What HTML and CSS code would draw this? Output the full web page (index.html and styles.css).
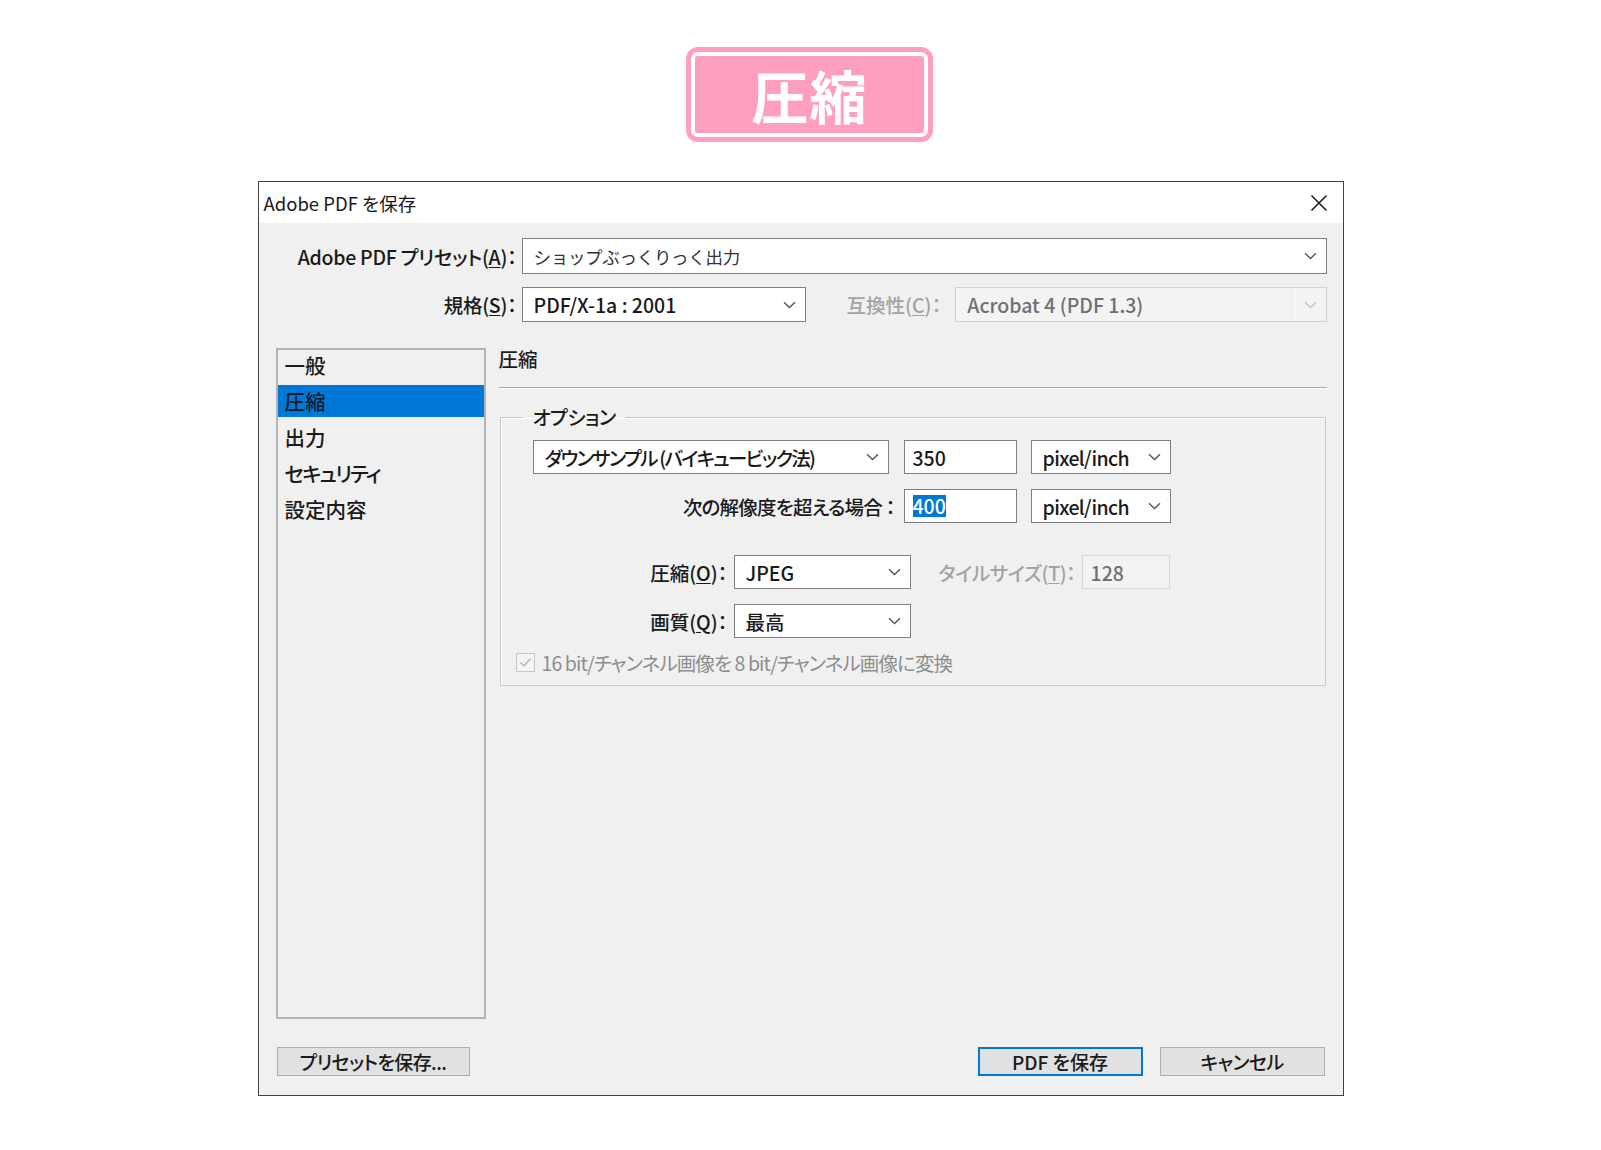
FILE: index.html
```html
<!DOCTYPE html>
<html lang="ja">
<head>
<meta charset="utf-8">
<title>Adobe PDF を保存</title>
<link rel="stylesheet" href="styles.css">
</head>
<body>
<div class="page">
  <div class="badge"><div class="badge-inner">圧縮</div></div>

  <div class="dialog">
    <div class="titlebar">
      <span class="title">Adobe PDF を保存</span>
      <svg class="close" width="18" height="18" viewBox="0 0 18 18"><path d="M1.5 1.5 L16.5 16.5 M16.5 1.5 L1.5 16.5" stroke="#1f1f1f" stroke-width="1.6" fill="none"/></svg>
    </div>

    <div class="body">
      <div class="row row-preset">
        <span class="lbl lbl-main">Adobe PDF プリセット(<u>A</u>)：</span>
        <div class="select select-preset">
          <span class="val val-plain">ショップぶっくりっく出力</span>
          <svg class="chev" width="13" height="8" viewBox="0 0 13 8"><path d="M1 1.2 L6.5 6.5 L12 1.2" stroke="#555" stroke-width="1.4" fill="none"/></svg>
        </div>
      </div>

      <div class="row row-std">
        <span class="lbl lbl-main">規格(<u>S</u>)：</span>
        <div class="select select-std">
          <span class="val">PDF/X-1a : 2001</span>
          <svg class="chev" width="13" height="8" viewBox="0 0 13 8"><path d="M1 1.2 L6.5 6.5 L12 1.2" stroke="#555" stroke-width="1.4" fill="none"/></svg>
        </div>
        <span class="lbl lbl-compat is-off">互換性(<u>C</u>)：</span>
        <div class="select select-compat is-disabled">
          <span class="val">Acrobat 4 (PDF 1.3)</span>
          <span class="drop-btn"><svg class="chev" width="13" height="8" viewBox="0 0 13 8"><path d="M1 1.2 L6.5 6.5 L12 1.2" stroke="#c4c4c4" stroke-width="1.4" fill="none"/></svg></span>
        </div>
      </div>

      <div class="main">
        <ul class="nav">
          <li class="nav-item">一般</li>
          <li class="nav-item is-active">圧縮</li>
          <li class="nav-item">出力</li>
          <li class="nav-item nav-kana">セキュリティ</li>
          <li class="nav-item">設定内容</li>
        </ul>

        <div class="pane">
          <div class="pane-title">圧縮</div>
          <fieldset class="group">
            <legend class="group-legend">オプション</legend>
            <div class="group-body">
              <div class="grow">
                <div class="select select-ds">
                  <span class="val val-tight">ダウンサンプル (バイキュービック法)</span>
                  <svg class="chev" width="13" height="8" viewBox="0 0 13 8"><path d="M1 1.2 L6.5 6.5 L12 1.2" stroke="#555" stroke-width="1.4" fill="none"/></svg>
                </div>
                <div class="input input-res"><span class="val">350</span></div>
                <div class="select select-unit">
                  <span class="val val-unit">pixel/inch</span>
                  <svg class="chev" width="13" height="8" viewBox="0 0 13 8"><path d="M1 1.2 L6.5 6.5 L12 1.2" stroke="#555" stroke-width="1.4" fill="none"/></svg>
                </div>
              </div>

              <div class="grow grow-2">
                <span class="lbl lbl-over">次の解像度を超える場合 ：</span>
                <div class="input input-res"><span class="val sel-text">400</span></div>
                <div class="select select-unit">
                  <span class="val val-unit">pixel/inch</span>
                  <svg class="chev" width="13" height="8" viewBox="0 0 13 8"><path d="M1 1.2 L6.5 6.5 L12 1.2" stroke="#555" stroke-width="1.4" fill="none"/></svg>
                </div>
              </div>

              <div class="grow grow-3">
                <span class="lbl lbl-short">圧縮(<u>O</u>)：</span>
                <div class="select select-small">
                  <span class="val">JPEG</span>
                  <svg class="chev" width="13" height="8" viewBox="0 0 13 8"><path d="M1 1.2 L6.5 6.5 L12 1.2" stroke="#555" stroke-width="1.4" fill="none"/></svg>
                </div>
                <span class="lbl lbl-tile is-off">タイルサイズ(<u>T</u>)：</span>
                <div class="input input-tile is-disabled"><span class="val">128</span></div>
              </div>

              <div class="grow grow-4">
                <span class="lbl lbl-short">画質(<u>Q</u>)：</span>
                <div class="select select-small">
                  <span class="val">最高</span>
                  <svg class="chev" width="13" height="8" viewBox="0 0 13 8"><path d="M1 1.2 L6.5 6.5 L12 1.2" stroke="#555" stroke-width="1.4" fill="none"/></svg>
                </div>
              </div>

              <div class="check-row">
                <span class="checkbox"><svg width="13" height="11" viewBox="0 0 13 11"><path d="M1.5 5.5 L5 9 L11.5 1.5" stroke="#b8b8b8" stroke-width="1.5" fill="none"/></svg></span>
                <span class="check-label">16 bit/チャンネル画像を 8 bit/チャンネル画像に変換</span>
              </div>
            </div>
          </fieldset>
        </div>
      </div>

      <div class="buttons">
        <div class="btn btn-preset">プリセットを保存...</div>
        <div class="btn-spacer"></div>
        <div class="btn btn-default">PDF を保存</div>
        <div class="btn btn-cancel">キャンセル</div>
      </div>
    </div>
  </div>
</div>
</body>
</html>
```

FILE: styles.css
```css
html, body {
  margin: 0;
  padding: 0;
  background: #ffffff;
}

body {
  font-family: "Noto Sans CJK JP", "Noto Sans", sans-serif;
  color: #1c1c1c;
}

.page {
  display: flex;
  flex-direction: column;
  align-items: center;
  padding-top: 47px;
}

/* pink heading badge */
.badge {
  box-sizing: border-box;
  width: 247px;
  height: 95px;
  margin-left: 18px;
  border: 5px solid #fd9fbd;
  border-radius: 12px;
  padding: 4px;
  background: #ffffff;
}

.badge-inner {
  height: 100%;
  background: #fd9fbd;
  border-radius: 3px;
  color: #ffffff;
  font-weight: 700;
  font-size: 57px;
  line-height: 77px;
  text-align: center;
  letter-spacing: 1px;
}

/* dialog window */
.dialog {
  box-sizing: border-box;
  width: 1086px;
  height: 915px;
  margin-top: 39px;
  border: 1px solid #404040;
  background: #f0f0f0;
  display: flex;
  flex-direction: column;
}

.titlebar {
  height: 41px;
  background: #ffffff;
  display: flex;
  align-items: center;
  padding: 0 15px 0 5px;
}

.title {
  flex: 1;
  font-size: 18.5px;
  font-feature-settings: "palt";
  color: #1a1a1a;
}

.close {
  display: block;
}

.body {
  flex: 1;
  padding: 15px 16px 18px 17px;
  display: flex;
  flex-direction: column;
}

.row {
  display: flex;
  align-items: center;
}

.row-preset {
  height: 36px;
}

.row-std {
  height: 35px;
  margin-top: 13px;
}

.lbl {
  font-size: 19.5px;
  font-weight: 500;
  font-feature-settings: "palt";
  white-space: nowrap;
  color: #1a1a1a;
}

.lbl u {
  text-underline-offset: 2px;
}

.lbl-main {
  width: 241px;
  margin-right: 5px;
  text-align: right;
}

.lbl-main:first-child {
  letter-spacing: -0.3px;
}

.is-off {
  color: #a3a3a3;
}

/* combo boxes and inputs */
.select,
.input {
  box-sizing: border-box;
  height: 100%;
  display: flex;
  align-items: center;
  background: #ffffff;
  border: 1px solid #7f7f7f;
  font-size: 19.5px;
  font-weight: 500;
  font-feature-settings: "palt";
  white-space: nowrap;
  color: #1a1a1a;
}

.select {
  padding: 0 9px 0 11px;
}

.select .val {
  flex: 1;
  overflow: hidden;
}

.val-plain {
  font-feature-settings: normal;
  font-weight: 400;
  font-size: 17.5px;
  letter-spacing: -0.3px;
  color: #333;
}

.val-tight {
  letter-spacing: -1.7px;
}

.val-unit {
  letter-spacing: -0.6px;
}

.chev {
  display: block;
  flex: none;
}

.select-preset {
  flex: 1;
}

.select-std {
  width: 284px;
}

.lbl-compat {
  margin-left: 41px;
  margin-right: 14px;
}

.select-compat {
  flex: 1;
  border-color: #d2d2d2;
  background: #f3f3f3;
  color: #707070;
  padding-right: 0;
}

.drop-btn {
  align-self: stretch;
  width: 30px;
  display: flex;
  align-items: center;
  justify-content: center;
  border-left: 1px solid #f8f8f8;
}

/* left category list and right pane */
.main {
  display: flex;
  margin-top: 26px;
  height: 671px;
}

.nav {
  box-sizing: border-box;
  width: 210px;
  height: 100%;
  margin: 0 12px 0 0;
  padding: 0;
  list-style: none;
  border: 2px solid #b3b3b3;
  background: #f0f0f0;
}

.nav-item {
  height: 32px;
  line-height: 32px;
  margin-bottom: 4px;
  padding-left: 7px;
  font-size: 20.5px;
  font-weight: 500;
  font-feature-settings: "palt";
  color: #1a1a1a;
}

.nav-kana {
  letter-spacing: -1.8px;
}

.nav-item:first-child {
  margin-top: -1px;
}

.nav-item.is-active {
  background: #0078d7;
  color: #0d1a2a;
}

.pane {
  flex: 1;
  display: flex;
  flex-direction: column;
}

.pane-title {
  height: 39px;
  line-height: 22px;
  font-size: 19.5px;
  font-weight: 500;
  font-feature-settings: "palt";
  margin-left: 1px;
  border-bottom: 1px solid #a8a8a8;
  box-shadow: 0 1px 0 #ffffff;
}

.group {
  margin: 18px 1px 0 2px;
  padding: 0;
  border: 1px solid #c9c9c9;
  box-shadow: inset 1px 1px 0 #ffffff;
  min-inline-size: 0;
}

.group-legend {
  margin-left: 22px;
  padding: 0 10px;
  font-size: 19.5px;
  font-weight: 500;
  line-height: 22px;
  font-feature-settings: "palt";
  letter-spacing: -0.5px;
}

.group-body {
  padding: 12px 0 13px 32px;
}

.grow {
  display: flex;
  align-items: center;
  height: 34px;
}

.grow-2 {
  margin-top: 15px;
}

.grow-3 {
  margin-top: 32px;
}

.grow-4 {
  margin-top: 15px;
}

.select-ds {
  width: 356px;
  margin-right: 15px;
}

.input {
  padding: 0 8px;
}

.input-res {
  width: 113px;
  margin-right: 14px;
}

.select-unit {
  width: 140px;
}

.lbl-over {
  width: 362px;
  margin-right: 9px;
  text-align: right;
  letter-spacing: -0.8px;
}

.sel-text {
  flex: none !important;
  background: #0078d7;
  color: #ffffff;
  line-height: 22px;
}

.lbl-short {
  width: 195px;
  margin-right: 6px;
  text-align: right;
}

.select-small {
  width: 177px;
}

.lbl-tile {
  margin-left: 28px;
  margin-right: 6px;
  letter-spacing: -0.4px;
}

.input-tile {
  width: 88px;
}

.input.is-disabled {
  background: #f3f3f3;
  border-color: #d6d6d6;
  color: #707070;
}

.check-row {
  display: flex;
  align-items: center;
  height: 19px;
  margin-top: 15px;
  margin-left: -17px;
}

.checkbox {
  box-sizing: border-box;
  width: 19px;
  height: 19px;
  border: 1px solid #c6c6c6;
  background: #f4f4f4;
  display: flex;
  align-items: center;
  justify-content: center;
  margin-right: 7px;
}

.checkbox svg {
  display: block;
}

.check-label {
  font-size: 19.5px;
  font-feature-settings: "palt";
  letter-spacing: -0.9px;
  color: #8d8d8d;
  white-space: nowrap;
}

/* bottom buttons */
.buttons {
  display: flex;
  margin-top: 28px;
  height: 29px;
}

.btn {
  box-sizing: border-box;
  height: 29px;
  display: flex;
  align-items: center;
  justify-content: center;
  background: #e1e1e1;
  border: 1px solid #adadad;
  font-size: 19px;
  font-weight: 500;
  font-feature-settings: "palt";
  color: #1a1a1a;
  white-space: nowrap;
}

.btn-preset {
  width: 193px;
  margin-left: 1px;
  letter-spacing: -0.6px;
}

.btn-spacer {
  flex: 1;
}

.btn-default {
  width: 165px;
  border: 2px solid #0078d7;
}

.btn-cancel {
  width: 165px;
  margin-left: 17px;
  margin-right: 2px;
  letter-spacing: -0.6px;
}
```
